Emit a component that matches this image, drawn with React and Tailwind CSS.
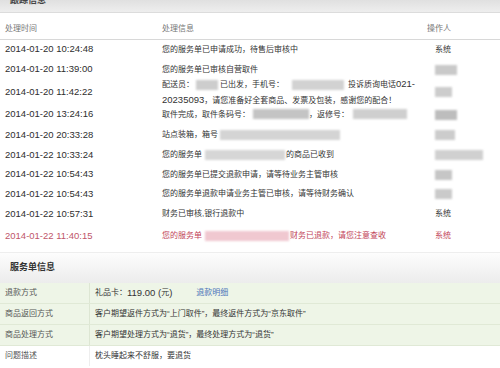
import React from "react";

const Blur = ({ className = "" }) => (
  <span className={`inline-block h-[10px] align-middle blur-[1.2px] ${className}`} />
);

const N = ({ children }) => <span className="text-[9.5px]">{children}</span>;

const rows = [
  { time: "2014-01-20 10:24:48", h: "h-[19px]", info: "您的服务单已申请成功，待售后审核中", op: "系统" },
  { time: "2014-01-20 11:39:00", h: "h-[21px]", info: "您的服务单已审核自营取件", op: <Blur className="w-[22px] bg-[#c9c9c9]" /> },
  {
    time: "2014-01-20 11:42:22",
    h: "h-[24px]",
    info: (
      <div className="leading-[15px]">
        <div>
          配送员：<Blur className="w-[22px] ml-[2px] mr-[2px] bg-[#cdcdcd]" />已出发，手机号：
          <Blur className="w-[52px] ml-[8px] mr-[4px] bg-[#d2d2d2]" />投诉质询电话<N>021-</N>
        </div>
        <div>
          <N>20235093</N>，请您准备好全套商品、发票及包装，感谢您的配合！
        </div>
      </div>
    ),
    op: <Blur className="w-[17px] bg-[#cccccc]" />,
  },
  {
    time: "2014-01-20 13:24:16",
    h: "h-[21px]",
    info: (
      <>
        取件完成，取件条码号：<Blur className="w-[56px] ml-[3px] bg-[#c4c4c4]" />，返修号：
        <Blur className="w-[54px] ml-[4px] bg-[#cfcfcf]" />
      </>
    ),
    op: <Blur className="w-[22px] bg-[#bdbdbd]" />,
  },
  {
    time: "2014-01-20 20:33:28",
    h: "h-[20px]",
    info: (
      <>
        站点装箱，箱号<Blur className="w-[120px] ml-[2px] bg-[#d4d4d4]" />
      </>
    ),
    op: <Blur className="w-[20px] bg-[#cccccc]" />,
  },
  {
    time: "2014-01-22 10:33:24",
    h: "h-[20px]",
    info: (
      <>
        您的服务单<Blur className="w-[80px] ml-[3px] mr-[1px] bg-[#d6d6d6]" />的商品已收到
      </>
    ),
    op: <Blur className="w-[48px] bg-[#d0d0d0]" />,
  },
  { time: "2014-01-22 10:54:43", h: "h-[19px]", info: "您的服务单已提交退款申请，请等待业务主管审核", op: <Blur className="w-[17px] bg-[#c6c6c6]" /> },
  { time: "2014-01-22 10:54:43", h: "h-[20px]", info: "您的服务单退款申请业务主管已审核，请等待财务确认", op: <Blur className="w-[17px] bg-[#cacaca]" /> },
  { time: "2014-01-22 10:57:31", h: "h-[20px]", info: "财务已审核,银行退款中", op: "系统" },
  {
    time: "2014-01-22 11:40:15",
    h: "h-[24px]",
    red: true,
    info: (
      <>
        您的服务单<Blur className="w-[84px] ml-[3px] mr-[1px] bg-[#f0c8d0]" />财务已退款，请您注意查收
      </>
    ),
    op: "系统",
  },
];

const details = [
  {
    label: "退款方式",
    value: (
      <>
        礼品卡：<N>119.00 (</N>元<N>)</N>
        <span className="ml-[24px] text-[#4a72b8]">退款明细</span>
      </>
    ),
    green: true,
  },
  { label: "商品返回方式", value: "客户期望返件方式为“上门取件”，最终返件方式为“京东取件”", green: true },
  { label: "商品处理方式", value: "客户期望处理方式为“退货”，最终处理方式为“退货”", green: true },
  { label: "问题描述", value: "枕头睡起来不舒服，要退货" },
];

export default function App() {
  return (
    <div
      className="w-[500px] h-[368px] overflow-hidden bg-white text-[8px] text-[#333]"
      style={{ fontFamily: '"Liberation Sans", "Noto Sans CJK SC", sans-serif' }}
    >
      {/* 跟踪信息 */}
      <div className="h-[13px] overflow-hidden bg-gradient-to-b from-[#e0e0e0] to-[#eeeeee] border-b border-[#dcdcdc]">
        <div className="mt-[-6px] pl-[10px] text-[9px] font-bold leading-[12px] text-[#444]">跟踪信息</div>
      </div>

      <div className="flex h-[27px] items-center pt-[6px] border-b border-[#d8d8d8] text-[#777]">
        <div className="w-[162px] pl-[5px]">处理时间</div>
        <div className="w-[265px]">处理信息</div>
        <div>操作人</div>
      </div>

      {rows.map((r, i) => (
        <div key={i} className={`flex items-center ${r.h} ${r.red ? "text-[#c24458]" : ""}`}>
          <div className={`w-[162px] pl-[5px] text-[9.5px] ${r.red ? "text-[#c0566a]" : "text-[#2e2e2e]"}`}>{r.time}</div>
          <div className="w-[273px]">{r.info}</div>
          <div className="flex items-center">{r.op}</div>
        </div>
      ))}

      {/* 服务单信息 */}
      <div className="mt-[4px] border-t border-[#eeeeee] h-[31px] flex items-center pl-[10px] bg-gradient-to-b from-[#fdfdfd] to-[#ececec] text-[9px] font-bold text-[#333]">
        服务单信息
      </div>

      <div>
        {details.map((d, i) => (
          <div
            key={i}
            className={`grid grid-cols-[90px_1fr] h-[21px] border-b ${d.green ? "bg-[#eef5e7] border-[#e0e9d6]" : "bg-white border-transparent"}`}
          >
            <div className={`flex items-center pl-[5px] border-r ${d.green ? "border-[#dde6d3]" : "border-[#eeeeee]"} text-[#555]`}>{d.label}</div>
            <div className="flex items-center pl-[5px]">{d.value}</div>
          </div>
        ))}
      </div>
    </div>
  );
}
